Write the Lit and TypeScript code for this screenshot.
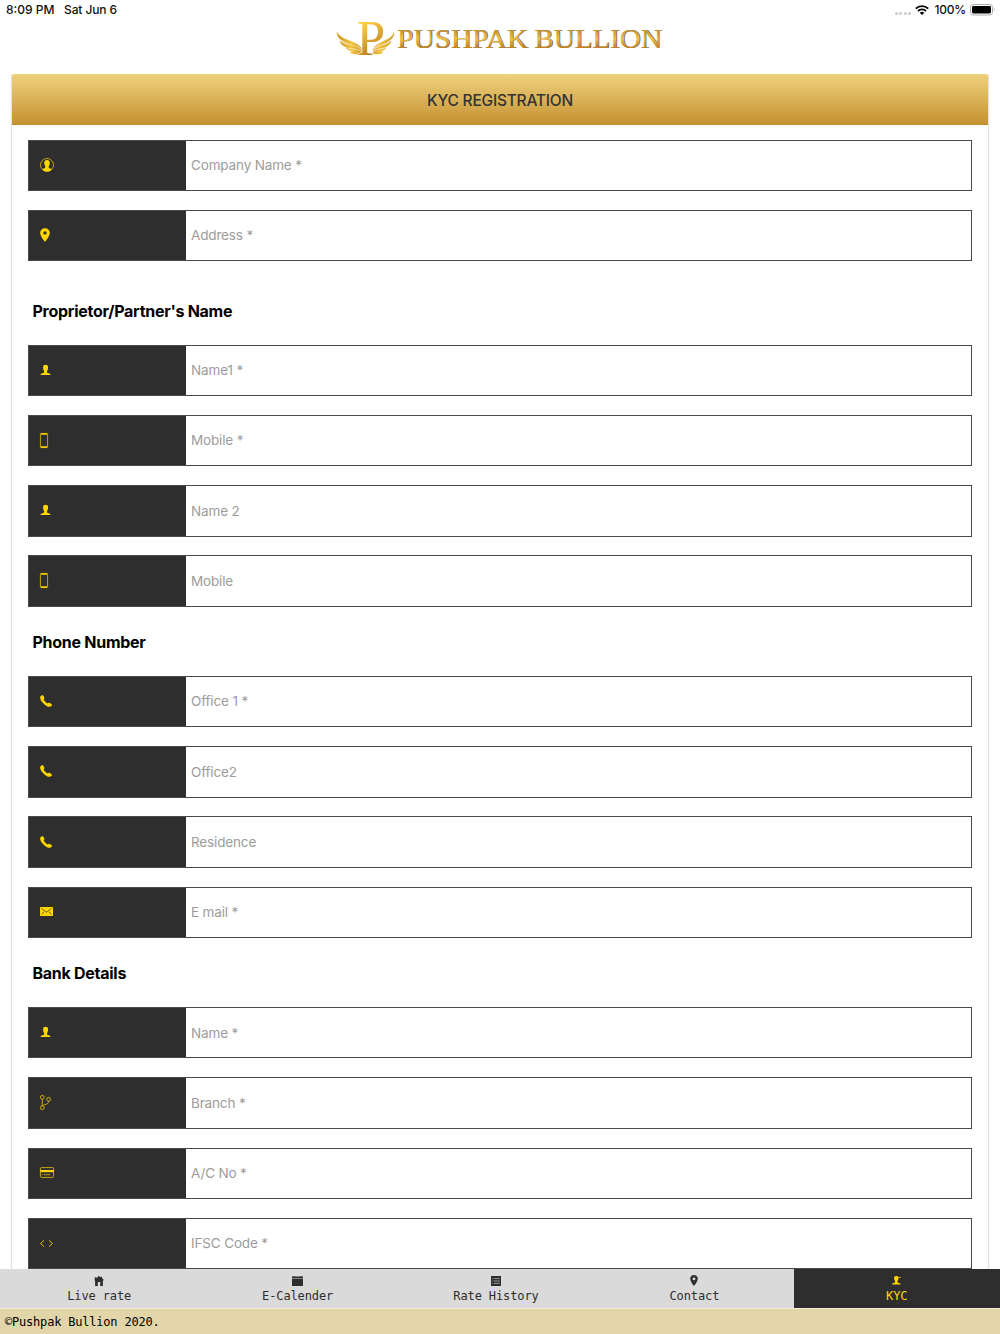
import { LitElement, html, svg, css } from "lit";
import { customElement, property } from "lit/decorators.js";

const person = svg`<path d="M3.1 3.2C3.1 1.6 4.1.8 5.6.8s2.5.8 2.5 2.4c0 1.5-.4 3-1 3.7-.3 1.1-.1 1.9.7 2.1 1.200.3 2.600.5 2.900 2.100H.4c.3-1.600 1.700-1.800 2.900-2.100.8-.2 1-.9.8-2-.7-.8-1-2.300-1-3.800z"/>`;

const icons: Record<string, { w: number; h: number; body: unknown }> = {
  account: {
    w: 14, h: 14,
    body: svg`<circle cx="7" cy="7" r="6.5" fill="none" stroke="currentColor" stroke-width=".7"/>
      <path d="M4.200 4.600C4.200 2.900 5.300 2 7 2s2.800.9 2.800 2.600c0 1.500-.4 2.900-1.100 3.700-.1 1 0 1.600.9 1.900 1 .3 1.700.5 2.200 1.100C10.600 12.700 8.900 13.500 7 13.500s-3.600-.8-4.800-2.200c.5-.6 1.200-.8 2.200-1.100.9-.3 1-.9.9-1.900-.7-.8-1.100-2.200-1.100-3.700z"/>`,
  },
  pin: {
    w: 10, h: 14,
    body: svg`<path fill-rule="evenodd" d="M5 .3C2.300.3.200 2.400.200 5c0 3.500 4.800 8.800 4.800 8.800S9.800 8.500 9.800 5C9.800 2.400 7.700.3 5 .3zM5 3.200a1.700 1.700 0 1 1 0 3.400 1.700 1.700 0 0 1 0-3.400z"/>`,
  },
  person: { w: 11, h: 12, body: person },
  mobile: {
    w: 8, h: 15,
    body: svg`<rect x=".4" y=".4" width="7.200" height="14.200" rx="1" fill="none" stroke="currentColor" stroke-width=".7"/>
      <path d="M.8.3h6.400v1.500H.8zM.8 13.200h6.400v1.500H.8z"/>`,
  },
  phone: {
    w: 12, h: 12,
    body: svg`<path d="M1 .8C1.700.1 2.900 0 3.400.7l.9 1.700c.3.6.1 1-.3 1.500-.4.500-.2.900.3 1.600.7.9 1.500 1.700 2.400 2.400.6.400 1 .6 1.500.2.500-.4.900-.5 1.500-.2l1.700 1c.8.5.7 1.500 0 2.200-1.300 1.200-3.700.8-6.300-1.200C1.800 7.400.3 5 .2 3.100.100 2 .300 1.400 1 .8z"/>`,
  },
  mail: {
    w: 13, h: 9,
    body: svg`<path d="M.6 0h11.800q.6 0 .6.600v7.800q0 .6-.6.600H.6Q0 9 0 8.400V.6Q0 0 .6 0z"/>
      <path d="M1.500 1.500L6.500 5.300l5-3.800M1.500 7.300l2.600-2.500M11.500 7.300L8.900 4.800" fill="none" stroke="#2e2e2e" stroke-width=".7"/>`,
  },
  branch: {
    w: 11, h: 15,
    body: svg`<g fill="none" stroke="currentColor" stroke-width=".85" opacity=".9"><circle cx="2.300" cy="2.300" r="1.900"/><circle cx="2.300" cy="12.700" r="1.900"/><circle cx="8.600" cy="4.300" r="1.900"/><path d="M2.300 4.200v6.600M8.600 6.200c0 3.700-4.400 2.800-6 4.800"/></g>`,
  },
  card: {
    w: 14, h: 11,
    body: svg`<rect x=".4" y=".6" width="13.200" height="9.800" rx="1" fill="none" stroke="currentColor" stroke-width=".8" opacity=".9"/>
      <path d="M.4 3h13.200v2.200H.4z"/><path d="M1.700 7.700h1.200M3.800 7.700h6.500" stroke="currentColor" stroke-width=".8" opacity=".85"/>`,
  },
  code: {
    w: 13, h: 7,
    body: svg`<path d="M4 .4L.6 3.500 4 6.600M9 .4l3.400 3.100L9 6.600" fill="none" stroke="currentColor" stroke-width="1" opacity=".9"/>`,
  },
  home: {
    w: 10, h: 10,
    body: svg`<path d="M5 0L.1 4.100l.5.5.5-.4V10h2.700V6h2.400v4h2.700V4.200l.5.4.5-.5L8 2V.7H6.900v.5z"/><path d="M.8 1.200h1.600v1.500l-1 .800H.800z"/>`,
  },
  calendar: {
    w: 11, h: 10,
    body: svg`<path d="M0 .6h1.700V0h.9v.6h5.800V0h.9v.6H11v1.500H0zM0 2.400h11V10H0z"/>`,
  },
  list: {
    w: 10, h: 10,
    body: svg`<path d="M0 0h10v10H0z"/><path d="M1.300 2.600h1M3 2.600h5.700M1.300 5h1M3 5h5.700M1.300 7.400h1M3 7.400h5.700" stroke="#dadada" stroke-width=".6"/>`,
  },
  spot: {
    w: 8, h: 11,
    body: svg`<path fill-rule="evenodd" d="M4 0C1.800 0 .2 1.700.2 3.800.2 6.600 4 11 4 11s3.800-4.400 3.800-7.200C7.800 1.700 6.200 0 4 0zm0 2.500a1.400 1.400 0 1 1 0 2.800 1.400 1.400 0 0 1 0-2.800z"/>`,
  },
  personAdd: {
    w: 9, h: 9,
    body: svg`<path d="M2 2C2 .7 2.800 0 4.200 0c1 0 1.700.3 2 1h2.500v.8H6.500c0 1.300-.3 2.300-.9 2.900-.2 1.200-.1 1.900.7 2.100 1 .3 2.200.4 2.400 1.800H0c.2-1.400 1.400-1.500 2.300-1.800.8-.2.9-.9.7-2.100C2.400 4.100 2 3.200 2 2z"/>`,
  },
};

@customElement("kyc-icon")
class KycIcon extends LitElement {
  @property() name = "person";
  static styles = css`
    :host { display: block; line-height: 0; }
    svg { display: block; fill: currentColor; overflow: visible; }
  `;
  render() {
    const i = icons[this.name];
    return html`<svg width=${i.w} height=${i.h} viewBox="0 0 ${i.w} ${i.h}">${i.body}</svg>`;
  }
}

@customElement("kyc-field")
class KycField extends LitElement {
  @property() icon = "";
  @property() label = "";
  static styles = css`
    :host { display: block; height: 51.5px; margin-bottom: 18.800px; }
    .field { display: flex; box-sizing: border-box; height: 100%; border: 1px solid #4a4a4a; background: #fff; }
    .side { box-sizing: border-box; width: 157px; padding: 0 0 1.200px 11px; background: #2e2e2e; display: flex; align-items: center; color: #ffd500; }
    .input {
      flex: 1; min-width: 0; border: 0; outline: 0; padding: 0 6px .400px 5px; background: transparent;
      font: 400 13.500px Inter, sans-serif; letter-spacing: -.150px;
    }
    .input::placeholder { color: #9c9c9c; opacity: 1; }
  `;
  render() {
    return html`<div class="field">
      <div class="side"><kyc-icon name=${this.icon}></kyc-icon></div>
      <input class="input" placeholder=${this.label} />
    </div>`;
  }
}

@customElement("brand-logo")
class BrandLogo extends LitElement {
  static styles = css`
    :host { display: block; }
    svg { display: block; overflow: visible; }
    .name { font: 400 28px "Liberation Serif", serif; }
    .mark { font: 400 51.500px "Liberation Serif", serif; }
  `;
  render() {
    const words = (dx: number, dy: number, fill: string, width: number) => svg`
      <g fill=${fill} stroke=${fill} stroke-width=${width}>
        <text class="name" x=${60 + dx} y=${27.6 + dy} textLength="131" lengthAdjust="spacingAndGlyphs">PUSHPAK</text>
        <text class="name" x=${197.2 + dx} y=${27.6 + dy} textLength="127.500" lengthAdjust="spacingAndGlyphs">BULLION</text>
      </g>`;
    return html`<svg width="326" height="48" viewBox="0 0 326 48">
      <defs>
        <linearGradient id="gold" gradientUnits="userSpaceOnUse" x1="0" y1="9" x2="0" y2="28">
          <stop offset="0" stop-color="#c08a2c" /><stop offset="0.5" stop-color="#edc04a" /><stop offset="1" stop-color="#bc8020" />
        </linearGradient>
        <linearGradient id="wing" gradientUnits="userSpaceOnUse" x1="0" y1="0" x2="57" y2="0">
          <stop offset="0" stop-color="#c89222" /><stop offset="0.25" stop-color="#f2c43c" /><stop offset="0.5" stop-color="#c08622" /><stop offset="0.75" stop-color="#efc03c" /><stop offset="1" stop-color="#cf9a2a" />
        </linearGradient>
        <linearGradient id="stem" gradientUnits="userSpaceOnUse" x1="20" y1="2" x2="42" y2="36">
          <stop offset="0.1" stop-color="#ffd040" /><stop offset="0.5" stop-color="#dda936" /><stop offset="0.9" stop-color="#b67b20" />
        </linearGradient>
      </defs>
      <g fill="url(#wing)" stroke="url(#wing)" stroke-width=".45">
        <path d="M0 12.500c3.500 6 12 7.500 18 10.500 4 2 6 4 7 7-3-4-7-4.500-12-6C6 21.800.500 19 0 12.500z" />
        <path d="M3 21c5 4 11 3.500 16 5.500 3 1.200 5 3 6 5.300-4-3.300-8-3-12-3.700-5-.8-9-2.800-10-7.100z" />
        <path d="M9 27.800c4 2.300 12 .6 16 5-5-1.600-13-.4-16-5z" />
        <path d="M13 32.200c4-.5 9-.8 12 1.400-4 .8-9 .9-12-1.400z" />
        <path d="M57 12.500c-2 6-9 7.500-14 10.500-4 2-6 4-7 7 2-4 6-4.500 10-6 6-2.200 10.500-5 11-11.500z" />
        <path d="M54 21c-4 4-8 3.500-12 5.500-3 1.200-5 3-6 5.300 3-3.300 6-3 9-3.700 4-.8 8-2.800 9-7.100z" />
        <path d="M49 27.800c-3 2.300-10 .6-13 5 4-1.600 10-.4 13-5z" />
        <path d="M46 32.200c-3-.5-7-.8-10 1.400 3 .8 8 .9 10-1.400z" />
      </g>
      <text class="mark" x="19.500" y="35" fill="url(#stem)" stroke="#fff" stroke-width="1" paint-order="stroke">P</text>
      ${words(0.7, 0.2, "#5c5848", 0.1)}
      ${words(0, 0, "url(#gold)", 0.15)}
    </svg>`;
  }
}

type Section = { title: string; gap: string; fields: [string, string][] };

const sections: Section[] = [
  { title: "", gap: "", fields: [["account", "Company Name *"], ["pin", "Address *"]] },
  { title: "Proprietor/Partner's Name", gap: "wide", fields: [["person", "Name1 *"], ["mobile", "Mobile *"], ["person", "Name 2"], ["mobile", "Mobile"]] },
  { title: "Phone Number", gap: "", fields: [["phone", "Office 1 *"], ["phone", "Office2"], ["phone", "Residence"], ["mail", "E mail *"]] },
  { title: "Bank Details", gap: "", fields: [["person", "Name *"], ["branch", "Branch *"], ["card", "A/C No *"], ["code", "IFSC Code *"]] },
];

const tabs: [string, string][] = [
  ["home", "Live rate"], ["calendar", "E-Calender"], ["list", "Rate History"], ["spot", "Contact"], ["personAdd", "KYC"],
];

@customElement("app-root")
class AppRoot extends LitElement {
  static styles = css`
    :host { display: block; font-family: Inter, sans-serif; color: #000; }
    .screen { width: 1000px; height: 1334px; display: flex; flex-direction: column; overflow: hidden; background: #fff; }
    .status { height: 20px; flex: none; box-sizing: border-box; display: flex; align-items: center; padding: 0 5px 0 6px; font-size: 12px; font-weight: 500; color: #111; }
    .time { width: 58px; white-space: nowrap; padding-bottom: 2px; }
    .date { flex: 1; padding-bottom: 2px; letter-spacing: -.1px; }
    .dots { display: flex; gap: 1.500px; padding: 7px 4px 0 0; }
    .dot { width: 3px; height: 3px; border-radius: 50%; background: #c8c8c8; }
    .percent { margin: 0 4px 0 5px; padding-bottom: 2px; letter-spacing: -.200px; }
    .brand { height: 54px; flex: none; display: flex; justify-content: center; align-items: flex-start; }
    .main { flex: 1; min-height: 0; overflow: hidden; padding: 0 11px; }
    .card { border: 1px solid #e2e2e2; border-top: 0; border-radius: 3px 3px 0 0; height: 1300px; box-shadow: 0 0 2px rgba(0, 0, 0, .08); }
    .title {
      height: 51px; box-sizing: border-box; padding-top: 2px; margin-bottom: 14.600px; display: flex; align-items: center; justify-content: center; border-radius: 2px 2px 0 0;
      background: linear-gradient(#efd27d, #c49030); font-size: 15.500px; font-weight: 500; letter-spacing: -.220px; color: #333;
    }
    .form { padding: 0 16px; }
    .heading { height: 50px; display: flex; align-items: flex-start; margin: 0; padding: 5.900px 0 0 4.500px; box-sizing: border-box; font-size: 16px; line-height: 20px; font-weight: 650; letter-spacing: -.270px; }
    .heading.wide { height: 64.400px; padding-top: 20.800px; }
    .tabs { height: 39px; flex: none; display: flex; background: #dadada; color: #2e2e2e; font: 12px "DejaVu Sans Mono", monospace; }
    .tab { width: 198.400px; display: flex; flex-direction: column; align-items: center; }
    .tab.active { width: auto; flex: 1; background: #2e2e2e; color: #ffd500; }
    .glyph { height: 18px; padding-top: 2px; display: flex; align-items: center; }
    .tab kyc-icon { margin-top: 1px; }
    .caption { line-height: 14px; letter-spacing: -.120px; }
    .copy { height: 26px; flex: none; box-sizing: border-box; border-top: 1px solid #f2ecd8; background: #e2d5a8; padding-left: 5px; font: 12px/26px "DejaVu Sans Mono", monospace; letter-spacing: -.200px; }
  `;
  render() {
    return html`<div class="screen">
      <div class="status">
        <span class="time">8:09 PM</span><span class="date">Sat Jun 6</span>
        <span class="dots">${[0, 1, 2, 3].map(() => html`<i class="dot"></i>`)}</span>
        <svg width="14" height="10" viewBox="0 0 14 10" fill="none" stroke="#000" stroke-width="1.800"><path d="M.8 3.600a8.800 8.800 0 0 1 12.400 0M3 6a5.700 5.700 0 0 1 8 0" /><path d="M7 10L4.700 7.800a3.300 3.300 0 0 1 4.600 0z" fill="#000" stroke="none" /></svg>
        <span class="percent">100%</span>
        <svg width="25" height="12" viewBox="0 0 25 12"><rect x=".5" y=".5" width="22" height="10.500" rx="2.800" fill="none" stroke="#aaa" /><rect x="2" y="2" width="19" height="7.500" rx="1.400" /><path d="M23.800 4c1.200.6 1.200 3 0 3.600z" fill="#aaa" /></svg>
      </div>
      <div class="brand"><brand-logo></brand-logo></div>
      <div class="main"><div class="card">
        <div class="title">KYC REGISTRATION</div>
        <div class="form">
          ${sections.map((s) => html`
            ${s.title ? html`<h3 class="heading ${s.gap}">${s.title}</h3>` : ""}
            ${s.fields.map(([icon, label]) => html`<kyc-field icon=${icon} label=${label}></kyc-field>`)}`)}
        </div>
      </div></div>
      <div class="tabs">
        ${tabs.map(([icon, label], i) => html`<div class="tab ${i === 4 ? "active" : ""}">
          <div class="glyph"><kyc-icon name=${icon}></kyc-icon></div><div class="caption">${label}</div></div>`)}
      </div>
      <div class="copy">©Pushpak Bullion 2020.</div>
    </div>`;
  }
}
